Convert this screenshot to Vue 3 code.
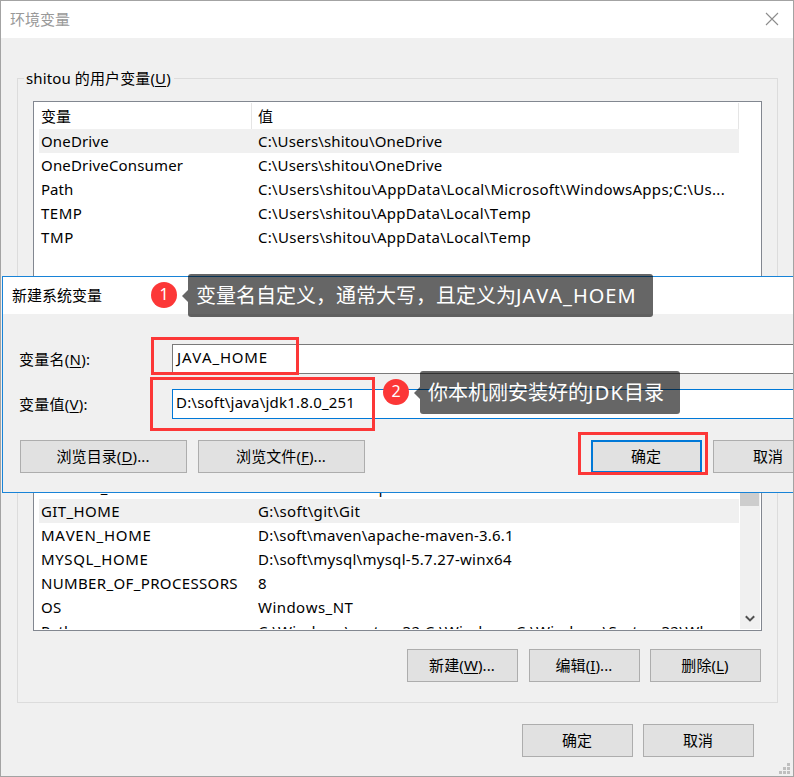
<script setup>
// `track` is the letter spacing in pixels: [name, value]
const userVars = [
  { name: 'OneDrive', value: 'C:\\Users\\shitou\\OneDrive', track: [0.15, 0.15], active: true },
  { name: 'OneDriveConsumer', value: 'C:\\Users\\shitou\\OneDrive', track: [0.17, 0.15] },
  { name: 'Path', value: 'C:\\Users\\shitou\\AppData\\Local\\Microsoft\\WindowsApps;C:\\Us...', track: [0, 0.31] },
  { name: 'TEMP', value: 'C:\\Users\\shitou\\AppData\\Local\\Temp', track: [0.5, 0.29] },
  { name: 'TMP', value: 'C:\\Users\\shitou\\AppData\\Local\\Temp', track: [0.7, 0.29] },
]
const systemVars = [
  { name: 'ERLANG_HOME', value: 'D:\\soft\\rabbitmq\\erl', track: [0.4, 0.4] },
  { name: 'GIT_HOME', value: 'G:\\soft\\git\\Git', track: [0.4, 0.33], active: true },
  { name: 'MAVEN_HOME', value: 'D:\\soft\\maven\\apache-maven-3.6.1', track: [0.72, 0.23] },
  { name: 'MYSQL_HOME', value: 'D:\\soft\\mysql\\mysql-5.7.27-winx64', track: [0.6, 0.28] },
  { name: 'NUMBER_OF_PROCESSORS', value: '8', track: [0.35, 0.23] },
  { name: 'OS', value: 'Windows_NT', track: [0.23, 0.45] },
  { name: 'Path', value: 'C:\\Windows\\system32;C:\\Windows;C:\\Windows\\System32\\Wb...', track: [0, 0.33] },
]
</script>

<template>
  <div class="window">
    <header class="titlebar">
      <span>环境变量</span>
      <svg class="close" width="14" height="14" viewBox="0 0 14 14">
        <path d="M1 1L13 13M13 1L1 13" stroke="#8c8c8c" stroke-width="1.1" fill="none" />
      </svg>
    </header>

    <main class="body">
      <section class="group user">
        <div class="legend">shitou 的用户变量(<u>U</u>)</div>
        <div class="list">
          <div class="row head"><span class="c1">变量</span><span class="c2">值</span></div>
          <div v-for="v in userVars" :key="v.name" class="row" :class="{ active: v.active }">
            <span class="c1" :style="{ letterSpacing: v.track[0] + 'px' }">{{ v.name }}</span>
            <span class="c2" :style="{ letterSpacing: v.track[1] + 'px' }">{{ v.value }}</span>
          </div>
        </div>
      </section>

      <section class="group system">
        <div class="list scrolls">
          <div class="rows">
            <div class="row head"><span class="c1"></span><span class="c2"></span></div>
            <div v-for="v in systemVars" :key="v.name" class="row" :class="{ active: v.active }">
              <span class="c1" :style="{ letterSpacing: v.track[0] + 'px' }">{{ v.name }}</span>
              <span class="c2" :style="{ letterSpacing: v.track[1] + 'px' }">{{ v.value }}</span>
            </div>
          </div>
          <div class="scrollbar">
            <div class="thumb"></div>
            <svg width="10" height="8" viewBox="0 0 10 8">
              <path d="M0.8 1.2L5 5.4L9.2 1.2" stroke="#505050" stroke-width="2" fill="none" />
            </svg>
          </div>
        </div>
        <div class="actions">
          <button class="btn">新建(<u>W</u>)...</button>
          <button class="btn">编辑(<u>I</u>)...</button>
          <button class="btn del">删除(<u>L</u>)</button>
        </div>
      </section>

      <footer class="footer">
        <button class="btn">确定</button>
        <button class="btn">取消</button>
      </footer>
    </main>

    <svg class="grip" width="11" height="11" viewBox="0 0 11 11" fill="#bfbfbf">
      <path d="M8 0h3v3h-3zM4 4h3v3h-3zM8 4h3v3h-3zM0 8h3v3h-3zM4 8h3v3h-3zM8 8h3v3h-3z" />
    </svg>

    <div class="dialog">
      <div class="dialog-title">新建系统变量</div>
      <div class="field name">
        <label>变量名(<u>N</u>):</label>
        <div class="input">JAVA_HOME</div>
      </div>
      <div class="field value">
        <label>变量值(<u>V</u>):</label>
        <div class="input focus">D:\soft\java\jdk1.8.0_251</div>
      </div>
      <div class="dialog-actions">
        <button class="btn wide">浏览目录(<u>D</u>)...</button>
        <button class="btn wide">浏览文件(<u>F</u>)...</button>
        <button class="btn primary">确定</button>
        <button class="btn">取消</button>
      </div>
    </div>

    <div class="mark mark-name"></div>
    <div class="mark mark-value"></div>
    <div class="mark mark-ok"></div>
    <div class="note note-one">
      <span class="badge">1</span><i class="arrow"></i>
      <span class="tip">变量名自定义，通常大写，且定义为<b>JAVA_HOEM</b></span>
    </div>
    <div class="note note-two">
      <span class="badge">2</span><i class="arrow"></i>
      <span class="tip">你本机刚安装好的<b>JDK</b>目录</span>
    </div>
  </div>
</template>

<style>
body { margin: 0; overflow: hidden; }
</style>

<style scoped>
* { box-sizing: border-box; }
.window {
  position: relative;
  width: 794px;
  height: 777px;
  overflow: hidden;
  display: flex;
  flex-direction: column;
  border: 1px solid #a3a3a3;
  background: #f0f0f0;
  color: #000;
  font: 15px/24px "Noto Sans", "Noto Sans CJK SC", sans-serif;
  font-kerning: none;
  white-space: nowrap;
}
u { text-decoration: underline; text-decoration-thickness: 1px; text-underline-offset: 2px; }
.titlebar {
  height: 37px;
  flex: none;
  display: flex;
  align-items: center;
  justify-content: space-between;
  padding: 0 14px 0 9px;
  background: #fff;
  color: #999;
}
.titlebar span { margin-top: -1px; }
.close { margin-top: -1px; }
.body { flex: 1; padding: 40px 15px 0 16px; }
.group { border: 1px solid #dcdcdc; padding: 0 15px; }
.user { height: 330px; }
.legend {
  width: max-content;
  height: 24px;
  margin: -13px 0 11px -9px;
  padding: 0 3px 0 2px;
  background: #f0f0f0;
  letter-spacing: 0.12px;
}
.list {
  height: 250px;
  width: 729px;
  overflow: hidden;
  padding: 1px 1px 1px 5px;
  border: 1px solid #828790;
  background: #fff;
}
.row { display: flex; height: 24px; width: 700px; line-height: 24px; }
.row span { padding-left: 2px; }
.row .c1 { width: 217px; flex: none; }
.row.head { height: 26px; line-height: 27px; }
.row.head .c1 { width: 213px; border-right: 1px solid #e5e5e5; }
.row.head .c2 { flex: 1; padding-left: 6px; border-right: 1px solid #e5e5e5; }
.active { background: #f0f0f0; }
.system { height: 285px; margin-top: 10px; padding-top: 28px; }
.scrolls { display: flex; height: 184px; padding-bottom: 1px; }
.rows { width: 701px; overflow: hidden; }
.scrollbar {
  width: 20px;
  display: flex;
  flex-direction: column;
  align-items: center;
  justify-content: space-between;
  padding-bottom: 6px;
  background: #f0f0f0;
}
.thumb { width: 19px; height: 57px; align-self: flex-start; background: #cdcdcd; }
.actions { display: flex; gap: 11px; padding: 18px 1px 0 0; justify-content: flex-end; }
.del { margin-left: -1px; }
.btn {
  width: 111px;
  height: 33px;
  flex: none;
  padding: 0 1px 2px 0;
  border: 1px solid #adadad;
  border-radius: 0;
  background: #e1e1e1;
  color: #000;
  font: inherit;
  font-kerning: none;
  letter-spacing: 0.1px;
}
.footer { display: flex; justify-content: flex-end; gap: 10px; padding: 21px 24px 0 0; }
.grip { position: absolute; right: 3px; bottom: 2px; }
.dialog {
  position: absolute;
  left: 1px;
  top: 275px;
  width: 830px;
  height: 217px;
  border: 1px solid #1883d7;
  background: #f0f0f0;
}
.dialog-title { height: 37px; padding-left: 9px; line-height: 36px; background: #fff; }
.field { display: flex; align-items: center; height: 30px; padding-left: 16px; }
.field label { width: 153px; flex: none; letter-spacing: 0.25px; }
.name { margin-top: 30px; }
.value { margin-top: 15px; }
.input {
  width: 640px;
  height: 30px;
  padding-left: 4px;
  border: 1px solid #7a7a7a;
  background: #fff;
  line-height: 24px;
  letter-spacing: 0.8px;
}
.focus { padding-left: 3px; border-color: #0078d7; letter-spacing: 0.2px; }
.dialog-actions { display: flex; gap: 11px; padding: 21px 0 0 17px; }
.wide { width: 167px; }
.primary { margin-left: 215px; border: 2px solid #0078d7; }
.mark { position: absolute; border: 3px solid #fc3737; }
.mark-name { left: 150px; top: 336px; width: 148px; height: 38px; }
.mark-value { left: 149px; top: 376px; width: 225px; height: 54px; }
.mark-ok { left: 577px; top: 431px; width: 130px; height: 43px; }
.note { position: absolute; display: flex; align-items: center; }
.note-one { left: 150px; top: 273px; }
.note-two { left: 382px; top: 370px; }
.badge {
  width: 26px;
  height: 26px;
  margin-top: -1px;
  border-radius: 50%;
  background: #fc3737;
  color: #fff;
  font-size: 16px;
  line-height: 24px;
  text-align: center;
}
.arrow {
  margin-left: 5px;
  border: 6px solid transparent;
  border-left: 0;
  border-right-color: rgba(0, 0, 0, 0.6);
}
.tip {
  height: 43px;
  padding: 0 16px 0 8px;
  border-radius: 3px;
  background: rgba(0, 0, 0, 0.6);
  color: #fff;
  font-size: 20px;
  line-height: 43px;
}
.note-one .tip { width: 465px; }
.note-two .tip { width: 260px; }
.tip b { font-weight: 400; letter-spacing: 1px; }
.note-two .tip b { letter-spacing: 1.2px; }
</style>
